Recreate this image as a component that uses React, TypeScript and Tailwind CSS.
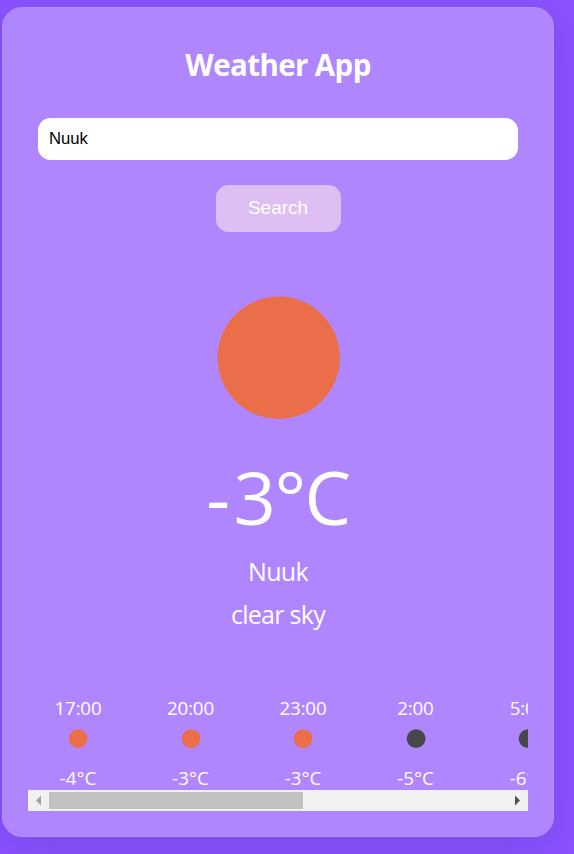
const forecast = [
  { time: '17:00', temp: '-4°C', day: true },
  { time: '20:00', temp: '-3°C', day: true },
  { time: '23:00', temp: '-3°C', day: true },
  { time: '2:00', temp: '-5°C', day: false },
  { time: '5:00', temp: '-6°C', day: false },
];

function Scrollbar() {
  return (
    <div className="flex h-[21px] w-[500px] items-center bg-[#f1f1f1]">
      <svg className="h-[21px] w-[21px]" viewBox="0 0 21 21">
        <path d="M8 10.5 L13 5.5 V15.5 Z" fill="#a3a3a3" />
      </svg>
      <div className="h-[17px] w-[254px] bg-[#c1c1c1]" />
      <svg className="ml-auto h-[21px] w-[21px]" viewBox="0 0 21 21">
        <path d="M13 10.5 L8 5.5 V15.5 Z" fill="#505050" />
      </svg>
    </div>
  );
}

export default function App() {
  return (
    <div className="h-[854px] w-[574px] overflow-hidden bg-[#8c52ff] pl-[2px] pt-[7px] font-['Open_Sans','Noto_Sans',sans-serif] text-white">
      <main className="flex h-[830px] w-[552px] flex-col items-center rounded-[20px] border border-[#b78fff] bg-[#b086ff] pt-[37px] shadow-[0_10px_40px_rgba(31,38,135,0.18)]">
        <h1 className="h-[40px] text-[29.5px] font-bold leading-[40px] tracking-[-0.6px]">Weather App</h1>
        <input
          className="mt-[33px] h-[42px] w-[480px] rounded-[12.5px] bg-white px-[11px] font-['Liberation_Sans',Arial,sans-serif] text-[16.67px] text-black outline-none"
          defaultValue="Nuuk"
        />
        <button className="mt-[25px] h-[47px] w-[125px] rounded-[12.5px] bg-[#debff3] font-['Liberation_Sans',Arial,sans-serif] text-[19px]">
          Search
        </button>
        <svg className="mt-[63px] h-[124px] w-[124px] shrink-0" viewBox="0 0 124 124">
          <circle cx="62.7" cy="62.7" r="61.2" fill="#eb6e4b" />
        </svg>
        <div className="mt-[28px] flex h-[100px] text-[74px] leading-[100px] tracking-[-1.5px]">
          <span className="mr-[5px]">-</span>
          <span>3°C</span>
        </div>
        <div className="mt-[7px] h-[34px] text-[25px] leading-[34px] tracking-[-0.7px]">Nuuk</div>
        <div className="mt-[9px] h-[34px] text-[25px] leading-[34px] tracking-[-0.7px]">clear sky</div>
        <section className="mt-[64px] w-[500px]">
          <div className="flex h-[95px] gap-[12.5px] overflow-hidden">
            {forecast.map((item) => (
              <div key={item.time} className="flex w-[100px] shrink-0 flex-col items-center text-[18.75px] leading-[26px]">
                <div className="h-[26px] shrink-0 tracking-[-0.2px]">{item.time}</div>
                <svg className="mt-[8px] h-[20px] w-[20px] shrink-0" viewBox="0 0 20 20">
                  <circle cx="10.1" cy="9.7" r="9.4" fill={item.day ? '#eb6e4b' : '#48484a'} />
                </svg>
                <div className="mt-[16px] h-[26px] shrink-0 tracking-[0.1px]">{item.temp}</div>
              </div>
            ))}
          </div>
          <Scrollbar />
        </section>
      </main>
    </div>
  );
}
